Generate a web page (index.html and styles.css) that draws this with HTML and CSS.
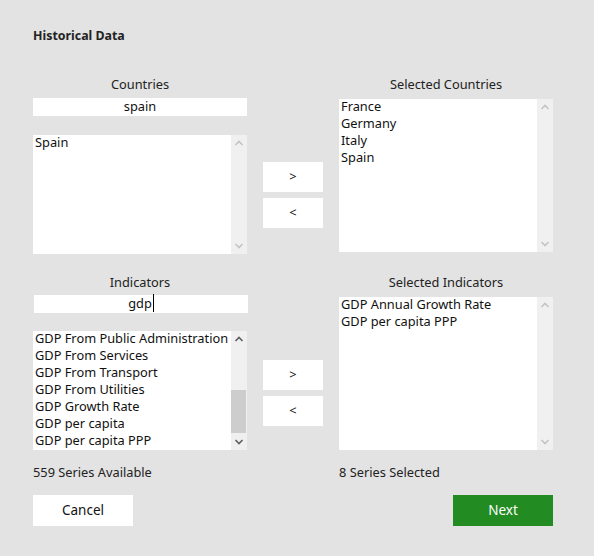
FILE: index.html
```html
<!DOCTYPE html>
<html>
<head>
<meta charset="utf-8">
<link rel="stylesheet" href="styles.css">
</head>
<body>
<div class="page">
  <h1 class="title">Historical Data</h1>

  <section class="picker picker-top">
    <div class="label label-left">Countries</div>
    <div class="label label-right">Selected Countries</div>
    <div class="search">spain</div>
    <div class="list list-left">
      <div class="items">
        <div class="item">Spain</div>
      </div>
      <div class="scroll scroll-off">
        <svg class="chev" width="16" height="16" viewBox="0 0 16 16"><polyline points="4.5,10 8,6.5 11.5,10" /></svg>
        <div class="track"></div>
        <svg class="chev" width="16" height="16" viewBox="0 0 16 16"><polyline points="4.5,6 8,9.5 11.5,6" /></svg>
      </div>
    </div>
    <div class="moves">
      <button class="move">&gt;</button>
      <button class="move">&lt;</button>
    </div>
    <div class="list list-right list-tall">
      <div class="items">
        <div class="item">France</div>
        <div class="item">Germany</div>
        <div class="item">Italy</div>
        <div class="item">Spain</div>
      </div>
      <div class="scroll scroll-off">
        <svg class="chev" width="16" height="16" viewBox="0 0 16 16"><polyline points="4.5,10 8,6.5 11.5,10" /></svg>
        <div class="track"></div>
        <svg class="chev" width="16" height="16" viewBox="0 0 16 16"><polyline points="4.5,6 8,9.5 11.5,6" /></svg>
      </div>
    </div>
  </section>

  <section class="picker picker-bottom">
    <div class="label label-left">Indicators</div>
    <div class="label label-right">Selected Indicators</div>
    <div class="search search-shift"><span class="typed">gdp</span></div>
    <div class="list list-left">
      <div class="items">
        <div class="item">GDP From Public Administration</div>
        <div class="item">GDP From Services</div>
        <div class="item">GDP From Transport</div>
        <div class="item">GDP From Utilities</div>
        <div class="item">GDP Growth Rate</div>
        <div class="item">GDP per capita</div>
        <div class="item">GDP per capita PPP</div>
      </div>
      <div class="scroll scroll-on">
        <svg class="chev" width="16" height="16" viewBox="0 0 16 16"><polyline points="4.5,10 8,6.5 11.5,10" /></svg>
        <div class="track"><div class="thumb"></div></div>
        <svg class="chev" width="16" height="16" viewBox="0 0 16 16"><polyline points="4.5,6 8,9.5 11.5,6" /></svg>
      </div>
    </div>
    <div class="moves">
      <button class="move">&gt;</button>
      <button class="move">&lt;</button>
    </div>
    <div class="list list-right list-tall">
      <div class="items">
        <div class="item">GDP Annual Growth Rate</div>
        <div class="item">GDP per capita PPP</div>
      </div>
      <div class="scroll scroll-off">
        <svg class="chev" width="16" height="16" viewBox="0 0 16 16"><polyline points="4.5,10 8,6.5 11.5,10" /></svg>
        <div class="track"></div>
        <svg class="chev" width="16" height="16" viewBox="0 0 16 16"><polyline points="4.5,6 8,9.5 11.5,6" /></svg>
      </div>
    </div>
  </section>

  <section class="footer">
    <div class="count">559 Series Available</div>
    <div class="count">8 Series Selected</div>
    <button class="action action-cancel">Cancel</button>
    <button class="action action-next">Next</button>
  </section>
</div>
</body>
</html>
```

FILE: styles.css
```css
html, body {
  margin: 0;
  padding: 0;
  background: #e3e3e3;
}

body {
  width: 594px;
  height: 556px;
  overflow: hidden;
  font-family: "Noto Sans", "Open Sans", sans-serif;
  font-size: 12.8px;
  color: #111;
}

.page {
  padding: 28px 0 0 33px;
}

.title {
  margin: 0;
  font-size: 12.4px;
  font-weight: bold;
  line-height: 16px;
  color: #222;
}

.picker {
  display: grid;
  grid-template-columns: 214px 60px 214px;
  column-gap: 16px;
  grid-template-rows: 17px auto auto;
  grid-template-areas:
    "ll . rl"
    "search . rlist"
    "llist moves rlist";
}

.picker-top {
  margin-top: 32px;
}

.picker-bottom {
  margin-top: 20px;
}

.label {
  line-height: 17px;
  text-align: center;
  color: #222;
}

.label-left { grid-area: ll; }
.label-right { grid-area: rl; }

.search {
  grid-area: search;
  background: #fff;
  height: 18px;
  line-height: 17px;
  text-align: center;
  margin-top: 5px;
}

.picker-bottom .search {
  margin-top: 4px;
}

.search-shift {
  margin-left: 1px;
  margin-right: -1px;
}

.typed {
  border-right: 1px solid #000;
  padding-right: 1px;
}

.list {
  display: flex;
  background: #fff;
  height: 119px;
}

.list-left {
  grid-area: llist;
  margin-top: 19px;
}

.picker-bottom .list-left {
  margin-top: 18px;
}

.list-right {
  grid-area: rlist;
  align-self: start;
  margin-top: 6px;
}

.list-tall { height: 153px; }

.items {
  flex: 1;
  padding-left: 2px;
  margin-top: -1px;
  overflow: hidden;
}

.item {
  line-height: 17px;
  height: 17px;
  white-space: nowrap;
}

.scroll {
  width: 16px;
  display: flex;
  flex-direction: column;
  background: #f0f0f0;
}

.track {
  flex: 1;
  position: relative;
}

.chev {
  display: block;
  fill: none;
  stroke-width: 1.6;
}

.scroll-off .chev { stroke: #c4c4c4; }
.scroll-on .chev { stroke: #5f5f5f; }

.thumb {
  position: absolute;
  left: 0;
  right: 1px;
  top: 43px;
  height: 43px;
  background: #cdcdcd;
}

.moves {
  grid-area: moves;
  align-self: center;
  display: flex;
  flex-direction: column;
  gap: 6px;
  margin-top: 19px;
}

.picker-bottom .moves {
  margin-top: 22px;
}

.move {
  height: 30px;
  width: 60px;
  border: none;
  background: #fff;
  font-family: inherit;
  font-size: 12.8px;
  line-height: 28px;
  color: #111;
  padding: 0 0 2px 0;
  margin: 0;
}

.footer {
  display: grid;
  grid-template-columns: 306px 214px;
  margin-top: 14px;
}

.count {
  line-height: 17px;
  white-space: nowrap;
  color: #222;
}

.action {
  margin-top: 14px;
  height: 31px;
  width: 100px;
  border: none;
  padding: 0 0 1px 0;
  font-family: inherit;
  font-size: 13.5px;
}

.action-cancel {
  background: #fff;
  color: #111;
}

.action-next {
  justify-self: end;
  background: #228b22;
  color: #fff;
}
```
